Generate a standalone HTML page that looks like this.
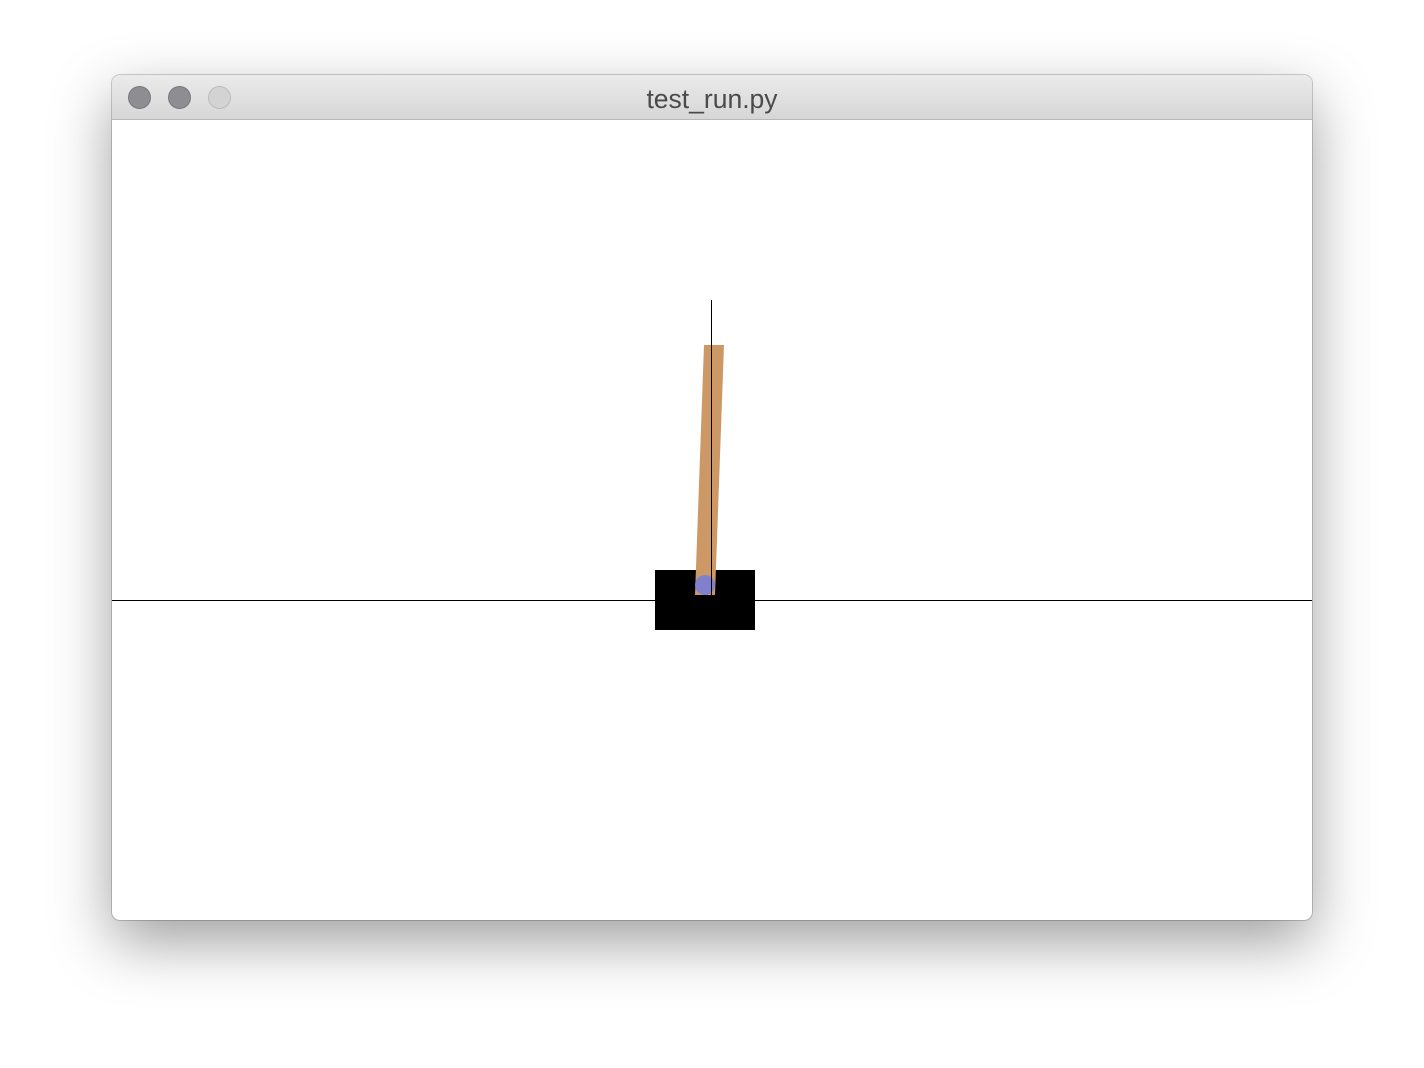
<!DOCTYPE html>
<html><head><style>
body{margin:0;width:1424px;height:1068px;background:#fff;position:relative;overflow:hidden;font-family:"Liberation Sans",sans-serif}
.win{position:absolute;left:112px;top:75px;width:1200px;height:845px;border-radius:8px;background:#fff;box-shadow:0 22px 60px rgba(0,0,0,0.38),0 0 0 1px rgba(0,0,0,0.18);overflow:hidden}
.tb{position:absolute;left:0;top:0;width:1200px;height:44px;background:linear-gradient(#ebebeb,#d6d6d6);border-bottom:1px solid #b8b8b8}
.dot{position:absolute;top:11px;width:23px;height:23px;border-radius:50%;box-sizing:border-box}
.t{position:absolute;left:0;right:0;top:9px;text-align:center;font-size:26.5px;color:#4a4a4a}
</style></head><body>
<div class="win">
<div class="tb">
<div class="dot" style="left:16px;background:#8e8d92;border:1px solid #78777c"></div>
<div class="dot" style="left:56px;background:#8e8d92;border:1px solid #78777c"></div>
<div class="dot" style="left:96px;background:#d3d3d3;border:1px solid #bcbcbc"></div>
<div class="t">test_run.py</div>
</div>
<svg style="position:absolute;left:0;top:0" width="1200" height="845">
<line x1="0" y1="525.5" x2="1200" y2="525.5" stroke="#000" stroke-width="1"/>
<rect x="543" y="495" width="100" height="60" fill="#000"/>
<polygon points="592,270 612,270 603,520 583,520" fill="#cc9966"/>
<circle cx="593" cy="510" r="10" fill="#8080cc"/>
<line x1="599.5" y1="225" x2="599.5" y2="520" stroke="#000" stroke-width="1"/>
</svg>
</div>
</body></html>
